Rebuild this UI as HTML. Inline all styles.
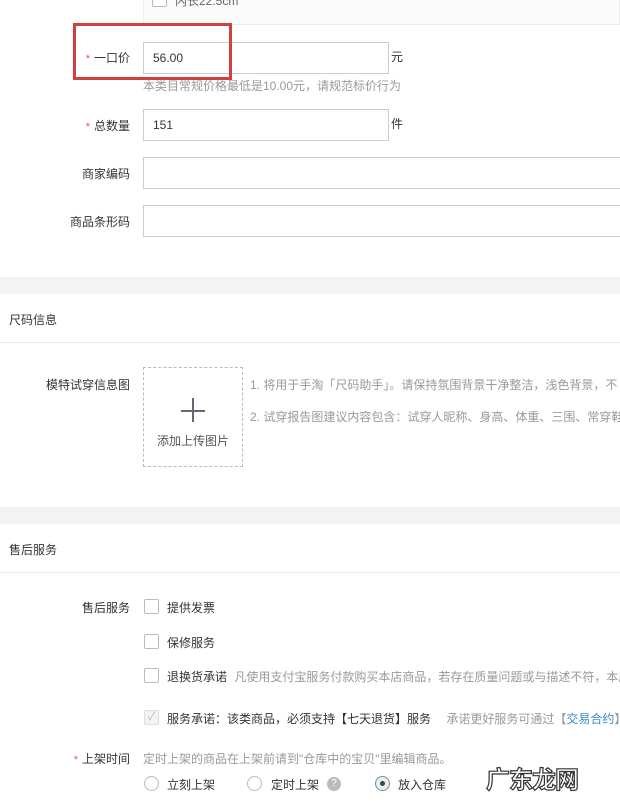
<!DOCTYPE html>
<html><head><meta charset="utf-8"><style>
*{margin:0;padding:0;box-sizing:border-box}
body{width:620px;height:806px;overflow:hidden;background:#fff;font-family:"Liberation Sans","Noto Sans CJK SC",sans-serif;font-size:12px;color:#333;position:relative}
.a{position:absolute;white-space:nowrap}
.lbl{position:absolute;right:490px;text-align:right;color:#333}
.star{color:#e85454;margin-right:4px;font-size:11px}
.in{position:absolute;border:1px solid #ccc;background:#fff;height:32px;padding-left:9px;line-height:30px;color:#333}
.band{position:absolute;left:0;width:620px;height:17px;background:#f2f3f5}
.line{position:absolute;left:0;width:620px;height:1px;background:#e8e8e8}
.cb{position:absolute;width:15px;height:15px;border:1px solid #bbb;border-radius:2px;background:#fff}
.rd{position:absolute;width:15px;height:15px;border:1px solid #bbb;border-radius:50%;background:#fff}
.g{color:#999}
</style></head><body>
<div class="a" style="left:143px;top:-1px;width:477px;height:26px;background:#fafafa;border:1px solid #eee;border-top:none"></div>
<div class="cb" style="left:152px;top:-8px"></div>
<div class="a g" style="left:175px;top:-8px;color:#666">内长22.5cm</div>

<div class="lbl" style="top:49px"><span class="star">*</span>一口价</div>
<div class="in" style="left:143px;top:42px;width:246px">56.00</div>
<div class="a" style="left:391px;top:48px">元</div>
<div class="a" style="left:73px;top:23px;width:159px;height:57px;border:3px solid #d33f3f"></div>
<div class="a g" style="left:143px;top:77px">本类目常规价格最低是10.00元，请规范标价行为</div>

<div class="lbl" style="top:117px"><span class="star">*</span>总数量</div>
<div class="in" style="left:143px;top:109px;width:246px">151</div>
<div class="a" style="left:391px;top:115px">件</div>

<div class="lbl" style="top:165px">商家编码</div>
<div class="in" style="left:143px;top:157px;width:480px"></div>
<div class="lbl" style="top:213px">商品条形码</div>
<div class="in" style="left:143px;top:205px;width:480px"></div>

<div class="band" style="top:277px"></div>
<div class="a" style="left:9px;top:311px">尺码信息</div>
<div class="line" style="top:342px"></div>

<div class="lbl" style="top:376px">模特试穿信息图</div>
<div class="a" style="left:143px;top:367px;width:100px;height:100px;border:1px dashed #bbb"></div>
<div class="a" style="left:181px;top:410px;width:24px;height:1.5px;background:#667"></div>
<div class="a" style="left:192px;top:398px;width:1.5px;height:24px;background:#667"></div>
<div class="a" style="left:157px;top:432px;color:#555">添加上传图片</div>
<div class="a g" style="left:250px;top:376px">1. 将用于手淘「尺码助手」。请保持氛围背景干净整洁，浅色背景，不</div>
<div class="a g" style="left:250px;top:408px">2. 试穿报告图建议内容包含：试穿人昵称、身高、体重、三围、常穿鞋</div>

<div class="band" style="top:507px"></div>
<div class="a" style="left:9px;top:541px">售后服务</div>
<div class="line" style="top:572px"></div>

<div class="lbl" style="top:599px">售后服务</div>
<div class="cb" style="left:144px;top:599px"></div><div class="a" style="left:167px;top:599px">提供发票</div>
<div class="cb" style="left:144px;top:634px"></div><div class="a" style="left:167px;top:634px">保修服务</div>
<div class="cb" style="left:144px;top:668px"></div><div class="a" style="left:167px;top:668px">退换货承诺 <span class="g" style="margin-left:4px">凡使用支付宝服务付款购买本店商品，若存在质量问题或与描述不符，本店</span></div>
<div class="cb" style="left:144px;top:710px;background:#f3f3f3;border-color:#ddd;color:#bbb;font-size:11px;line-height:13px;text-align:center">✓</div>
<div class="a" style="left:167px;top:710px">服务承诺：该类商品，必须支持【七天退货】服务 <span class="g" style="margin-left:12px">承诺更好服务可通过【<span style="color:#3a8ad0">交易合约</span>】</span></div>

<div class="lbl" style="top:750px"><span class="star">*</span>上架时间</div>
<div class="a g" style="left:143px;top:750px">定时上架的商品在上架前请到"仓库中的宝贝"里编辑商品。</div>
<div class="rd" style="left:144px;top:776px"></div><div class="a" style="left:167px;top:776px">立刻上架</div>
<div class="rd" style="left:247px;top:776px"></div><div class="a" style="left:271px;top:776px">定时上架</div>
<div class="a" style="left:327px;top:777px;width:14px;height:14px;border-radius:50%;background:#bbb;color:#fff;font-size:10px;text-align:center;line-height:14px">?</div>
<div class="rd" style="left:375px;top:776px;border-color:#888;background:#e3f1fa"></div>
<div class="a" style="left:380px;top:781px;width:5px;height:5px;border-radius:50%;background:#444"></div>
<div class="a" style="left:398px;top:776px">放入仓库</div>
<div class="a" style="left:486px;top:760px;font-size:24px;font-weight:bold;color:#fff;-webkit-text-stroke:1.2px #333;letter-spacing:-1px">广东龙网</div>
</body></html>
